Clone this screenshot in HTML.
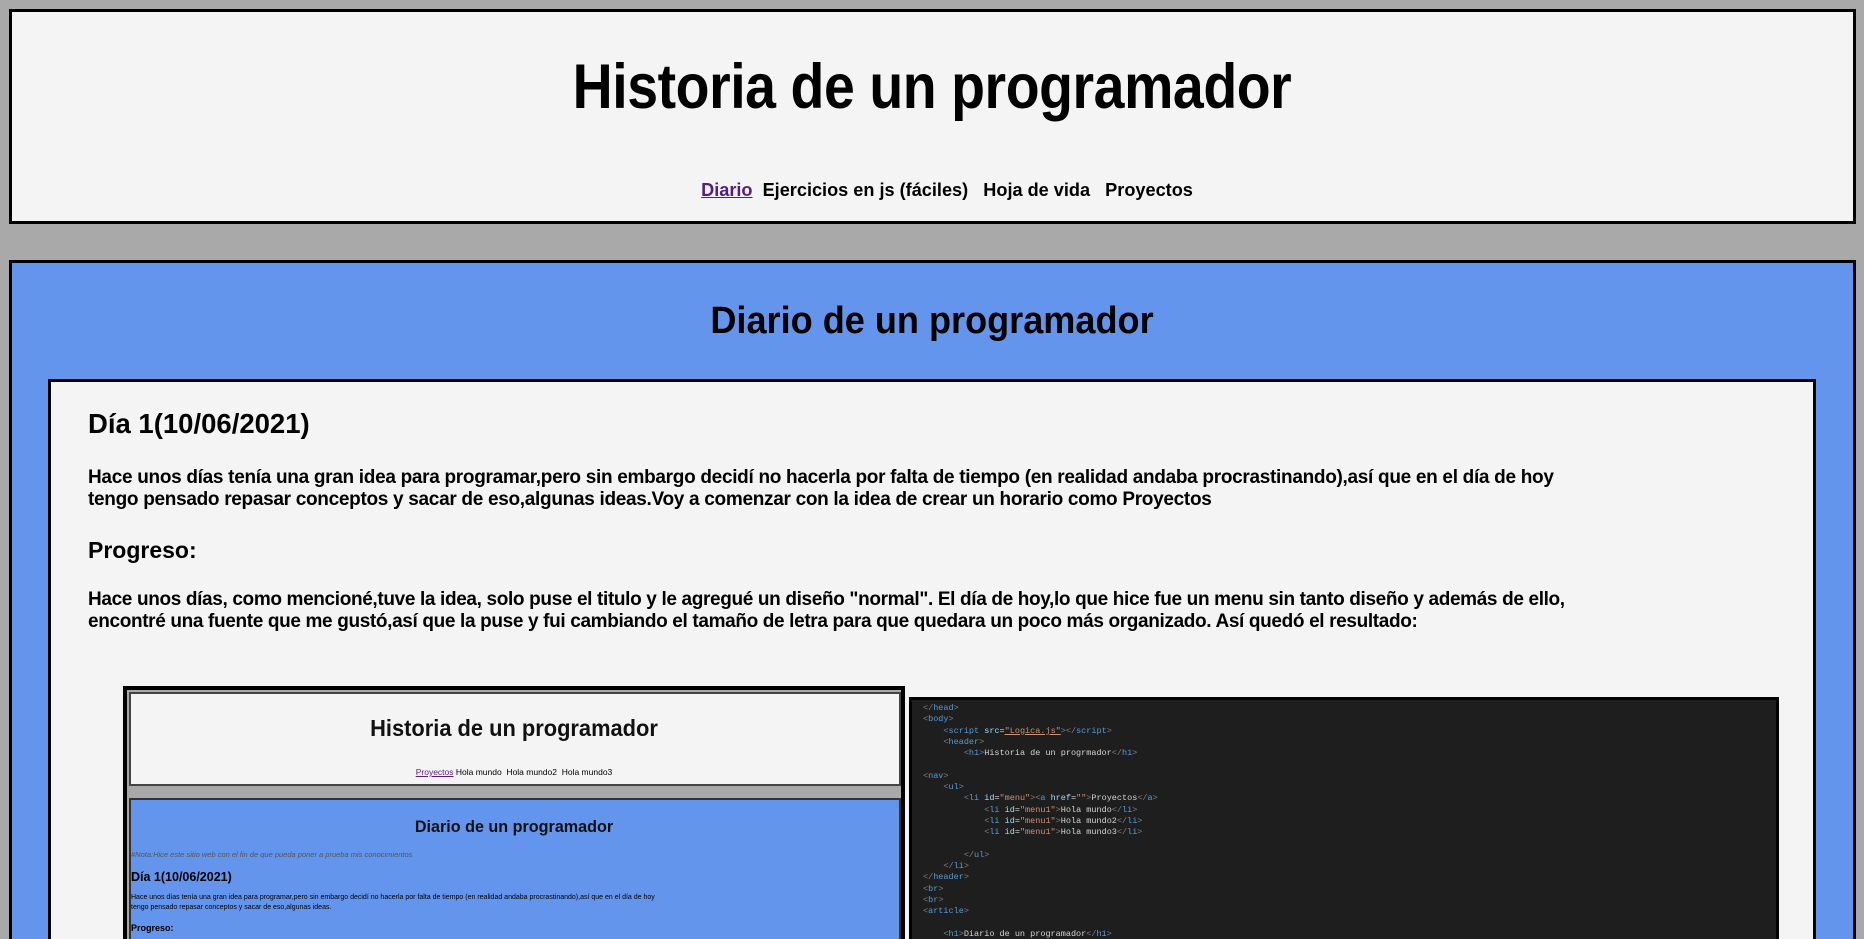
<!DOCTYPE html>
<html><head><meta charset="utf-8"><style>
*{margin:0;padding:0;box-sizing:border-box}
html,body{width:1864px;height:939px;overflow:hidden}
body{background:#a9a9a9;font-family:"Liberation Sans",sans-serif;font-weight:bold;color:#000}
#w{position:relative;width:1864px;height:939px;overflow:hidden}
.abs{position:absolute}
.nw{white-space:nowrap}
.hdr{left:9px;top:9px;width:1847px;height:215px;background:#f4f4f4;border:3px solid #000}
.main{left:9px;top:260px;width:1847px;height:679px;background:#6495ed;border:3px solid #000;border-bottom:none}
.art{left:48px;top:379px;width:1768px;height:560px;background:#f4f4f4;border:3px solid #000;border-bottom:none}
.c{left:0;width:100%;text-align:center}
.p{font-size:19px;line-height:21.7px;letter-spacing:-0.3px}
.code{left:909px;top:697px;width:870px;height:242px;overflow:hidden;background:#1e1e1e;border:3px solid #000;border-bottom:none;font-family:"Liberation Mono",monospace;font-weight:normal;font-size:8.5px;line-height:11.3px;color:#d4d4d4;padding:3px 0 0 11px}
.code .t{color:#569cd6}.code .a{color:#9cdcfe}.code .s{color:#ce9178}.code .g{color:#808080}
.code div{white-space:pre}
</style></head><body><div id="w">
<div class="abs hdr"></div>
<div class="abs c nw" style="top:52px;font-size:63px;line-height:70px;letter-spacing:-0.5px;transform:scaleX(0.88)">Historia de un programador</div>
<div class="abs c nw" style="top:179px;left:30px;width:1834px;font-size:18.5px;line-height:22px;transform:scaleX(0.98)"><span style="color:#551a8b;text-decoration:underline">Diario</span>&nbsp; Ejercicios en js (fáciles) &nbsp; Hoja de vida &nbsp; Proyectos</div>

<div class="abs main"></div>
<div class="abs c nw" style="top:298px;font-size:38px;line-height:46px;transform:scaleX(0.95)">Diario de un programador</div>
<div class="abs art"></div>
<div class="abs nw" style="left:88px;top:408px;font-size:27.5px;line-height:32px">Día 1(10/06/2021)</div>
<div class="abs nw p" style="left:88px;top:467px">Hace unos días tenía una gran idea para programar,pero sin embargo decidí no hacerla por falta de tiempo (en realidad andaba procrastinando),así que en el día de hoy<br>tengo pensado repasar conceptos y sacar de eso,algunas ideas.Voy a comenzar con la idea de crear un horario como Proyectos</div>
<div class="abs nw" style="left:88px;top:536px;font-size:23px;line-height:28px">Progreso:</div>
<div class="abs nw p" style="left:88px;top:589px;letter-spacing:-0.35px">Hace unos días, como mencioné,tuve la idea, solo puse el titulo y le agregué un diseño "normal". El día de hoy,lo que hice fue un menu sin tanto diseño y además de ello,<br>encontré una fuente que me gustó,así que la puse y fui cambiando el tamaño de letra para que quedara un poco más organizado. Así quedó el resultado:</div>

<div class="abs" style="left:123px;top:686px;width:782px;height:253px;background:#a9a9a9;border:4px solid #000;border-bottom:none;overflow:hidden">
  <div class="abs" style="left:2px;top:2px;width:772px;height:94px;background:#f4f4f4;border:2px solid #444"></div>
  <div class="abs c nw" style="top:24px;font-size:23px;line-height:28px;color:#111;transform:scaleX(0.95)">Historia de un programador</div>
  <div class="abs c nw" style="top:77px;font-size:8.5px;font-weight:normal"><span style="color:#551a8b;text-decoration:underline">Proyectos</span> Hola mundo &nbsp;Hola mundo2 &nbsp;Hola mundo3</div>
  <div class="abs" style="left:2px;top:108px;width:772px;height:141px;background:#6495ed;border:2px solid #333;border-bottom:none"></div>
  <div class="abs c nw" style="top:126px;font-size:17px;line-height:22px;color:#111;transform:scaleX(0.95)">Diario de un programador</div>
  <div class="abs nw" style="left:4px;top:160px;font-size:7.5px;font-style:italic;font-weight:normal;color:#555">#Nota:Hice este sitio web con el fin de que pueda poner a prueba mis conocimientos</div>
  <div class="abs nw" style="left:4px;top:180px;font-size:12.5px">Día 1(10/06/2021)</div>
  <div class="abs nw" style="left:4px;top:203px;font-size:7px;line-height:10px;font-weight:normal">Hace unos días tenía una gran idea para programar,pero sin embargo decidí no hacerla por falta de tiempo (en realidad andaba procrastinando),así que en el día de hoy<br>tengo pensado repasar conceptos y sacar de eso,algunas ideas.</div>
  <div class="abs nw" style="left:4px;top:233px;font-size:9px;line-height:11px">Progreso:</div>
</div>

<div class="abs code">
<div><span class="g">&lt;/</span><span class="t">head</span><span class="g">&gt;</span></div>
<div><span class="g">&lt;</span><span class="t">body</span><span class="g">&gt;</span></div>
<div>    <span class="g">&lt;</span><span class="t">script</span> <span class="a">src</span>=<span class="s" style="text-decoration:underline">"Logica.js"</span><span class="g">&gt;&lt;/</span><span class="t">script</span><span class="g">&gt;</span></div>
<div>    <span class="g">&lt;</span><span class="t">header</span><span class="g">&gt;</span></div>
<div>        <span class="g">&lt;</span><span class="t">h1</span><span class="g">&gt;</span>Historia de un progrmador<span class="g">&lt;/</span><span class="t">h1</span><span class="g">&gt;</span></div>
<div> </div>
<div><span class="g">&lt;</span><span class="t">nav</span><span class="g">&gt;</span></div>
<div>    <span class="g">&lt;</span><span class="t">ul</span><span class="g">&gt;</span></div>
<div>        <span class="g">&lt;</span><span class="t">li</span> <span class="a">id</span>=<span class="s">"menu"</span><span class="g">&gt;&lt;</span><span class="t">a</span> <span class="a">href</span>=<span class="s">""</span><span class="g">&gt;</span>Proyectos<span class="g">&lt;/</span><span class="t">a</span><span class="g">&gt;</span></div>
<div>            <span class="g">&lt;</span><span class="t">li</span> <span class="a">id</span>=<span class="s">"menu1"</span><span class="g">&gt;</span>Hola mundo<span class="g">&lt;/</span><span class="t">li</span><span class="g">&gt;</span></div>
<div>            <span class="g">&lt;</span><span class="t">li</span> <span class="a">id</span>=<span class="s">"menu1"</span><span class="g">&gt;</span>Hola mundo2<span class="g">&lt;/</span><span class="t">li</span><span class="g">&gt;</span></div>
<div>            <span class="g">&lt;</span><span class="t">li</span> <span class="a">id</span>=<span class="s">"menu1"</span><span class="g">&gt;</span>Hola mundo3<span class="g">&lt;/</span><span class="t">li</span><span class="g">&gt;</span></div>
<div> </div>
<div>        <span class="g">&lt;/</span><span class="t">ul</span><span class="g">&gt;</span></div>
<div>    <span class="g">&lt;/</span><span class="t">li</span><span class="g">&gt;</span></div>
<div><span class="g">&lt;/</span><span class="t">header</span><span class="g">&gt;</span></div>
<div><span class="g">&lt;</span><span class="t">br</span><span class="g">&gt;</span></div>
<div><span class="g">&lt;</span><span class="t">br</span><span class="g">&gt;</span></div>
<div><span class="g">&lt;</span><span class="t">article</span><span class="g">&gt;</span></div>
<div> </div>
<div>    <span class="g">&lt;</span><span class="t">h1</span><span class="g">&gt;</span>Diario de un programador<span class="g">&lt;/</span><span class="t">h1</span><span class="g">&gt;</span></div>
</div>
</div></body></html>
